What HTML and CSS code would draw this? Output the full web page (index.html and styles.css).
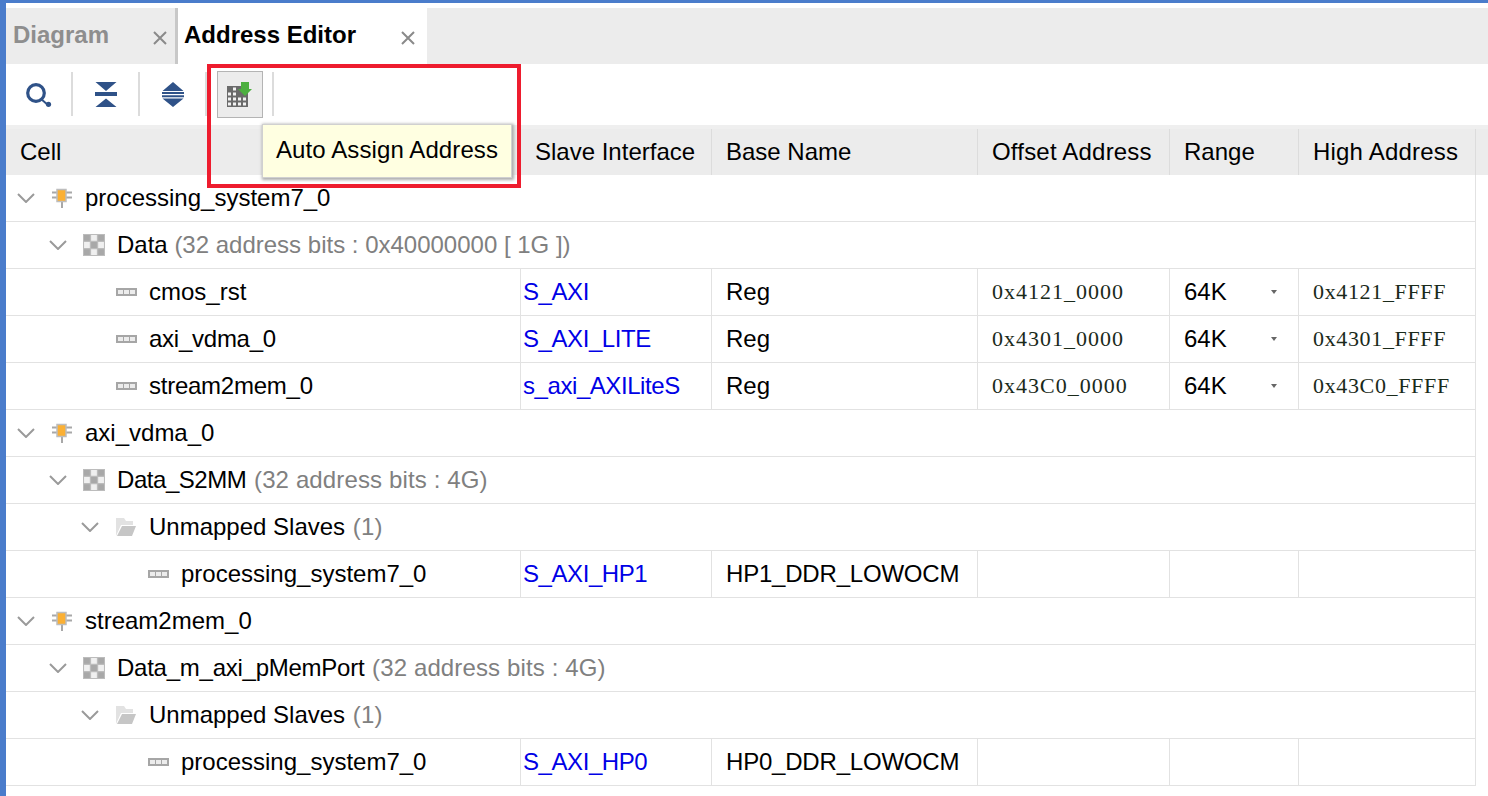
FILE: index.html
```html
<!DOCTYPE html>
<html lang="en">

<head>
  <meta charset="UTF-8" />
  <title>Address Editor</title>
  <link rel="stylesheet" href="styles.css">
</head>

<body>
  <!-- shared icons -->
  <svg class="defs" width="0" height="0">
    <symbol id="close" viewBox="0 0 14 14">
      <path d="M1 1L13 13M13 1L1 13" fill="none" stroke="#8a8a8a" stroke-width="2" />
    </symbol>
    <symbol id="chevron" viewBox="0 0 18 10">
      <path d="M1 1 L9 9 L17 1" fill="none" stroke="#9a9a9a" stroke-width="2" />
    </symbol>
    <symbol id="chip" viewBox="0 0 22 22">
      <path d="M1 5.500H21M1 10.500H21M11 14V21" fill="none" stroke="#a8a8a8" stroke-width="2" />
      <rect x="6" y="2.500" width="9" height="12" fill="#fbb034" stroke="#bdbdbd" stroke-width="1.500" />
    </symbol>
    <symbol id="grid" viewBox="0 0 21 21">
      <rect width="21" height="21" fill="#bcbcbc" />
      <path d="M1 1h5.500v5.500h-5.500zM14.500 1h5.500v5.500h-5.500zM7.750 7.750h5.500v5.500h-5.500zM1 14.500h5.500v5.500h-5.500zM14.500 14.500h5.500v5.500h-5.500z" fill="#a8a8a8" />
      <path d="M7.750 1h5.500v5.500h-5.500zM1 7.750h5.500v5.500h-5.500zM14.500 7.750h5.500v5.500h-5.500zM7.750 14.500h5.500v5.500h-5.500z" fill="#f0f0f0" />
    </symbol>
    <symbol id="port" viewBox="0 0 21 8">
      <rect width="21" height="8" fill="#a6a6a6" />
      <path d="M2 2h5v4h-5zM8 2h5v4h-5zM14 2h5v4h-5z" fill="#ececec" />
    </symbol>
    <symbol id="folder" viewBox="0 0 22 20">
      <path d="M1 19V1H9L11 4H18V8H6L1 19Z" fill="#e2e2e2" />
      <path d="M2 19L7 9H21L17 19Z" fill="#c6c6c6" />
    </symbol>
  </svg>

  <div class="app">
    <div class="tabs">
      <div class="tab">Diagram<svg class="close"><use href="#close" /></svg></div>
      <div class="tab active">Address Editor<svg class="close"><use href="#close" /></svg></div>
    </div>

    <div class="toolbar">
      <div class="tool">
        <svg width="26" height="26" viewBox="0 0 26 26">
          <circle cx="10" cy="12" r="8.300" fill="none" stroke="#2f5288" stroke-width="3.200" />
          <path d="M15 18L22 24" stroke="#2f5288" stroke-width="2" />
          <circle cx="22.500" cy="23.300" r="2.600" fill="#2f5288" />
        </svg>
      </div>
      <div class="sep"></div>
      <div class="tool">
        <svg width="22" height="26" viewBox="0 0 22 26">
          <path d="M0.500 1H21.500L11 10ZM0 11H22V15H0ZM11 17.500L21.500 26H0.500Z" fill="#2f5288" />
        </svg>
      </div>
      <div class="sep"></div>
      <div class="tool">
        <svg width="22" height="26" viewBox="0 0 22 26">
          <path d="M11 1L21.500 10H0.500ZM0 11H22V13H0ZM0 14.200H22V16.200H0ZM0.500 17.500H21.500L11 26Z" fill="#2f5288" />
        </svg>
      </div>
      <div class="sep"></div>
      <div class="tool">
        <div class="tool-btn">
          <svg width="26" height="25" viewBox="0 0 26 25">
            <rect x="0" y="4" width="21" height="21" fill="#6a6a6a" />
            <path d="M6 5.500h3v3h-3zM1 10.500h3v3h-3zM6 10.500h3v3h-3zM1 15.500h3v3h-3zM6 15.500h3v3h-3zM11 15.500h3v3h-3zM16 15.500h3v3h-3zM1 20.500h3v3h-3zM6 20.500h3v3h-3zM11 20.500h3v3h-3zM16 20.500h3v3h-3z" fill="#f2f2f2" />
            <path d="M14 0H22V7H25L18 14L11 7H14Z" fill="#4caf3f" />
          </svg>
        </div>
      </div>
      <div class="sep"></div>
    </div>

    <table class="grid">
      <colgroup>
        <col class="c-cell"><col class="c-slave"><col class="c-base"><col class="c-offset"><col class="c-range"><col class="c-high"><col>
      </colgroup>
      <thead>
        <tr>
          <th>Cell</th>
          <th>Slave Interface</th>
          <th>Base Name</th>
          <th class="wide">Offset Address</th>
          <th>Range</th>
          <th class="wide">High Address</th>
          <th class="filler"></th>
        </tr>
      </thead>
      <tbody>
        <tr>
          <td colspan="6"><div class="node lvl0"><svg class="chev"><use href="#chevron" /></svg><svg class="ico"><use href="#chip" /></svg>processing_system7_0</div></td>
        </tr>
        <tr>
          <td colspan="6"><div class="node lvl1"><svg class="chev"><use href="#chevron" /></svg><svg class="ico"><use href="#grid" /></svg>Data&nbsp;<span class="hint">(32 address bits : 0x40000000 [ 1G ])</span></div></td>
        </tr>
        <tr>
          <td><div class="node lvl2"><span class="chev"></span><svg class="ico ico-port"><use href="#port" /></svg>cmos_rst</div></td>
          <td class="link">S_AXI</td>
          <td>Reg</td>
          <td class="addr">0x4121_0000</td>
          <td><div class="range">64K<span class="caret"></span></div></td>
          <td class="addr high">0x4121_FFFF</td>
        </tr>
        <tr>
          <td><div class="node lvl2"><span class="chev"></span><svg class="ico ico-port"><use href="#port" /></svg><span class="tight">axi_vdma_0</span></div></td>
          <td class="link">S_AXI_LITE</td>
          <td>Reg</td>
          <td class="addr">0x4301_0000</td>
          <td><div class="range">64K<span class="caret"></span></div></td>
          <td class="addr high">0x4301_FFFF</td>
        </tr>
        <tr>
          <td><div class="node lvl2"><span class="chev"></span><svg class="ico ico-port"><use href="#port" /></svg><span class="tight">stream2mem_0</span></div></td>
          <td class="link">s_axi_AXILiteS</td>
          <td>Reg</td>
          <td class="addr">0x43C0_0000</td>
          <td><div class="range">64K<span class="caret"></span></div></td>
          <td class="addr high">0x43C0_FFFF</td>
        </tr>
        <tr>
          <td colspan="6"><div class="node lvl0"><svg class="chev"><use href="#chevron" /></svg><svg class="ico"><use href="#chip" /></svg>axi_vdma_0</div></td>
        </tr>
        <tr>
          <td colspan="6"><div class="node lvl1"><svg class="chev"><use href="#chevron" /></svg><svg class="ico"><use href="#grid" /></svg><span class="tighter">Data_S2MM</span>&nbsp;<span class="hint loose">(32 address bits : 4G)</span></div></td>
        </tr>
        <tr>
          <td colspan="6"><div class="node lvl2"><svg class="chev"><use href="#chevron" /></svg><svg class="ico"><use href="#folder" /></svg>Unmapped Slaves&nbsp;<span class="hint loose">(1)</span></div></td>
        </tr>
        <tr>
          <td><div class="node lvl3"><span class="chev"></span><svg class="ico ico-port"><use href="#port" /></svg>processing_system7_0</div></td>
          <td class="link">S_AXI_HP1</td>
          <td class="caps">HP1_DDR_LOWOCM</td>
          <td></td>
          <td></td>
          <td></td>
        </tr>
        <tr>
          <td colspan="6"><div class="node lvl0"><svg class="chev"><use href="#chevron" /></svg><svg class="ico"><use href="#chip" /></svg>stream2mem_0</div></td>
        </tr>
        <tr>
          <td colspan="6"><div class="node lvl1"><svg class="chev"><use href="#chevron" /></svg><svg class="ico"><use href="#grid" /></svg><span class="tight">Data_m_axi_pMemPort</span>&nbsp;<span class="hint loose">(32 address bits : 4G)</span></div></td>
        </tr>
        <tr>
          <td colspan="6"><div class="node lvl2"><svg class="chev"><use href="#chevron" /></svg><svg class="ico"><use href="#folder" /></svg>Unmapped Slaves&nbsp;<span class="hint loose">(1)</span></div></td>
        </tr>
        <tr>
          <td><div class="node lvl3"><span class="chev"></span><svg class="ico ico-port"><use href="#port" /></svg>processing_system7_0</div></td>
          <td class="link">S_AXI_HP0</td>
          <td class="caps">HP0_DDR_LOWOCM</td>
          <td></td>
          <td></td>
          <td></td>
        </tr>
      </tbody>
    </table>

    <div class="tooltip">Auto Assign Address</div>
    <div class="callout"></div>
  </div>
</body>

</html>
```

FILE: styles.css
```css
* {
  box-sizing: border-box;
}

html,
body {
  height: 100%;
  margin: 0;
  overflow: hidden;
}

body {
  background: #fff;
  color: #000;
  font-family: "Liberation Sans", Arial, sans-serif;
  font-size: 24px;
}

.defs {
  display: block;
  height: 0;
}

.app {
  border-left: 6px solid #4a7ccb;
  border-top: 3px solid #4a7ccb;
  height: 796px;
  padding-top: 5px;
  position: relative;
}

/* Tabs */
.tabs {
  background: #ececec;
  display: flex;
  height: 56px;
}

.tab {
  align-items: center;
  border-right: 3px solid #c8c8c8;
  color: #8e8e8e;
  display: flex;
  font-weight: 700;
  justify-content: space-between;
  padding: 0 8px 3px 7px;
  width: 172px;
}

.tab.active {
  background: #fff;
  border-right: 0;
  color: #000;
  padding: 0 12px 3px 6px;
  width: 249px;
}

.close {
  display: block;
  flex: none;
  height: 14px;
  margin-top: 7px;
  width: 14px;
}

/* Toolbar */
.toolbar {
  align-items: center;
  border-bottom: 4px solid #efefef;
  display: flex;
  height: 65px;
  padding-bottom: 1px;
}

.tool {
  align-items: center;
  display: flex;
  justify-content: center;
  width: 65px;
}

.sep {
  background: #dcdcdc;
  height: 44px;
  width: 2px;
}

.tool-btn {
  align-items: center;
  background: #ececec;
  border: 1px solid #b4b4b4;
  display: flex;
  height: 47px;
  justify-content: center;
  width: 46px;
}

/* Table */
.grid {
  border-collapse: separate;
  border-spacing: 0;
  table-layout: fixed;
  width: 1482px;
}

.c-cell {
  width: 515px;
}

.c-slave {
  width: 191px;
}

.c-base {
  width: 266px;
}

.c-offset {
  width: 192px;
}

.c-range {
  width: 129px;
}

.c-high {
  width: 177px;
}

.grid th {
  background: #ececec;
  border-right: 1px solid #dcdcdc;
  font-weight: 400;
  height: 46px;
  padding: 0 0 0 14px;
  text-align: left;
}

.grid th.wide {
  letter-spacing: .2px;
}

.grid th.filler {
  border-right: 0;
  padding: 0;
}

.grid td {
  border-bottom: 1px solid #e2e2e2;
  border-right: 1px solid #e2e2e2;
  height: 47px;
  padding: 0 0 0 14px;
  white-space: nowrap;
}

.grid td[colspan] {
  padding: 0;
}

.grid td:first-child {
  padding: 0;
}

.grid td.link {
  color: #0000e6;
  letter-spacing: -.43px;
  padding-left: 2px;
}

.grid td.caps {
  letter-spacing: -.2px;
}

.grid td.addr {
  color: #1a2a1a;
  font-family: "Liberation Serif", serif;
  font-size: 22px;
  letter-spacing: 1px;
}

.grid td.high {
  letter-spacing: .65px;
}

.tight {
  letter-spacing: -.25px;
}

.tighter {
  letter-spacing: -.45px;
}

.node {
  align-items: center;
  display: flex;
}

.lvl0 {
  padding-left: 12px;
}

.lvl1 {
  padding-left: 44px;
}

.lvl2 {
  padding-left: 76px;
}

.lvl3 {
  padding-left: 108px;
}

.chev {
  display: block;
  flex: none;
  height: 10px;
  margin-left: -1px;
  margin-right: 16px;
  width: 18px;
}

.ico {
  display: block;
  flex: none;
  height: 22px;
  margin-right: 12px;
  width: 22px;
}

.ico-port {
  height: 8px;
  margin-left: 1px;
  margin-right: 12px;
  width: 21px;
}

.hint {
  color: #808080;
}

.hint.loose {
  letter-spacing: .13px;
  padding-left: 1px;
}

.range {
  align-items: center;
  display: flex;
  justify-content: space-between;
  padding-right: 21px;
}

.caret {
  border-left: 3.5px solid transparent;
  border-right: 3.5px solid transparent;
  border-top: 4px solid #666;
}

/* Overlays */
.tooltip {
  background: #ffffe1;
  border: 1px solid #d0d0d0;
  box-shadow: 1px 1px 3px 1px #aaa;
  height: 54px;
  left: 256px;
  letter-spacing: .1px;
  line-height: 50px;
  padding-left: 13px;
  position: absolute;
  top: 121px;
  width: 250px;
}

.callout {
  border: 4px solid #ee1c2e;
  height: 124px;
  left: 201px;
  position: absolute;
  top: 61px;
  width: 314px;
}
```
